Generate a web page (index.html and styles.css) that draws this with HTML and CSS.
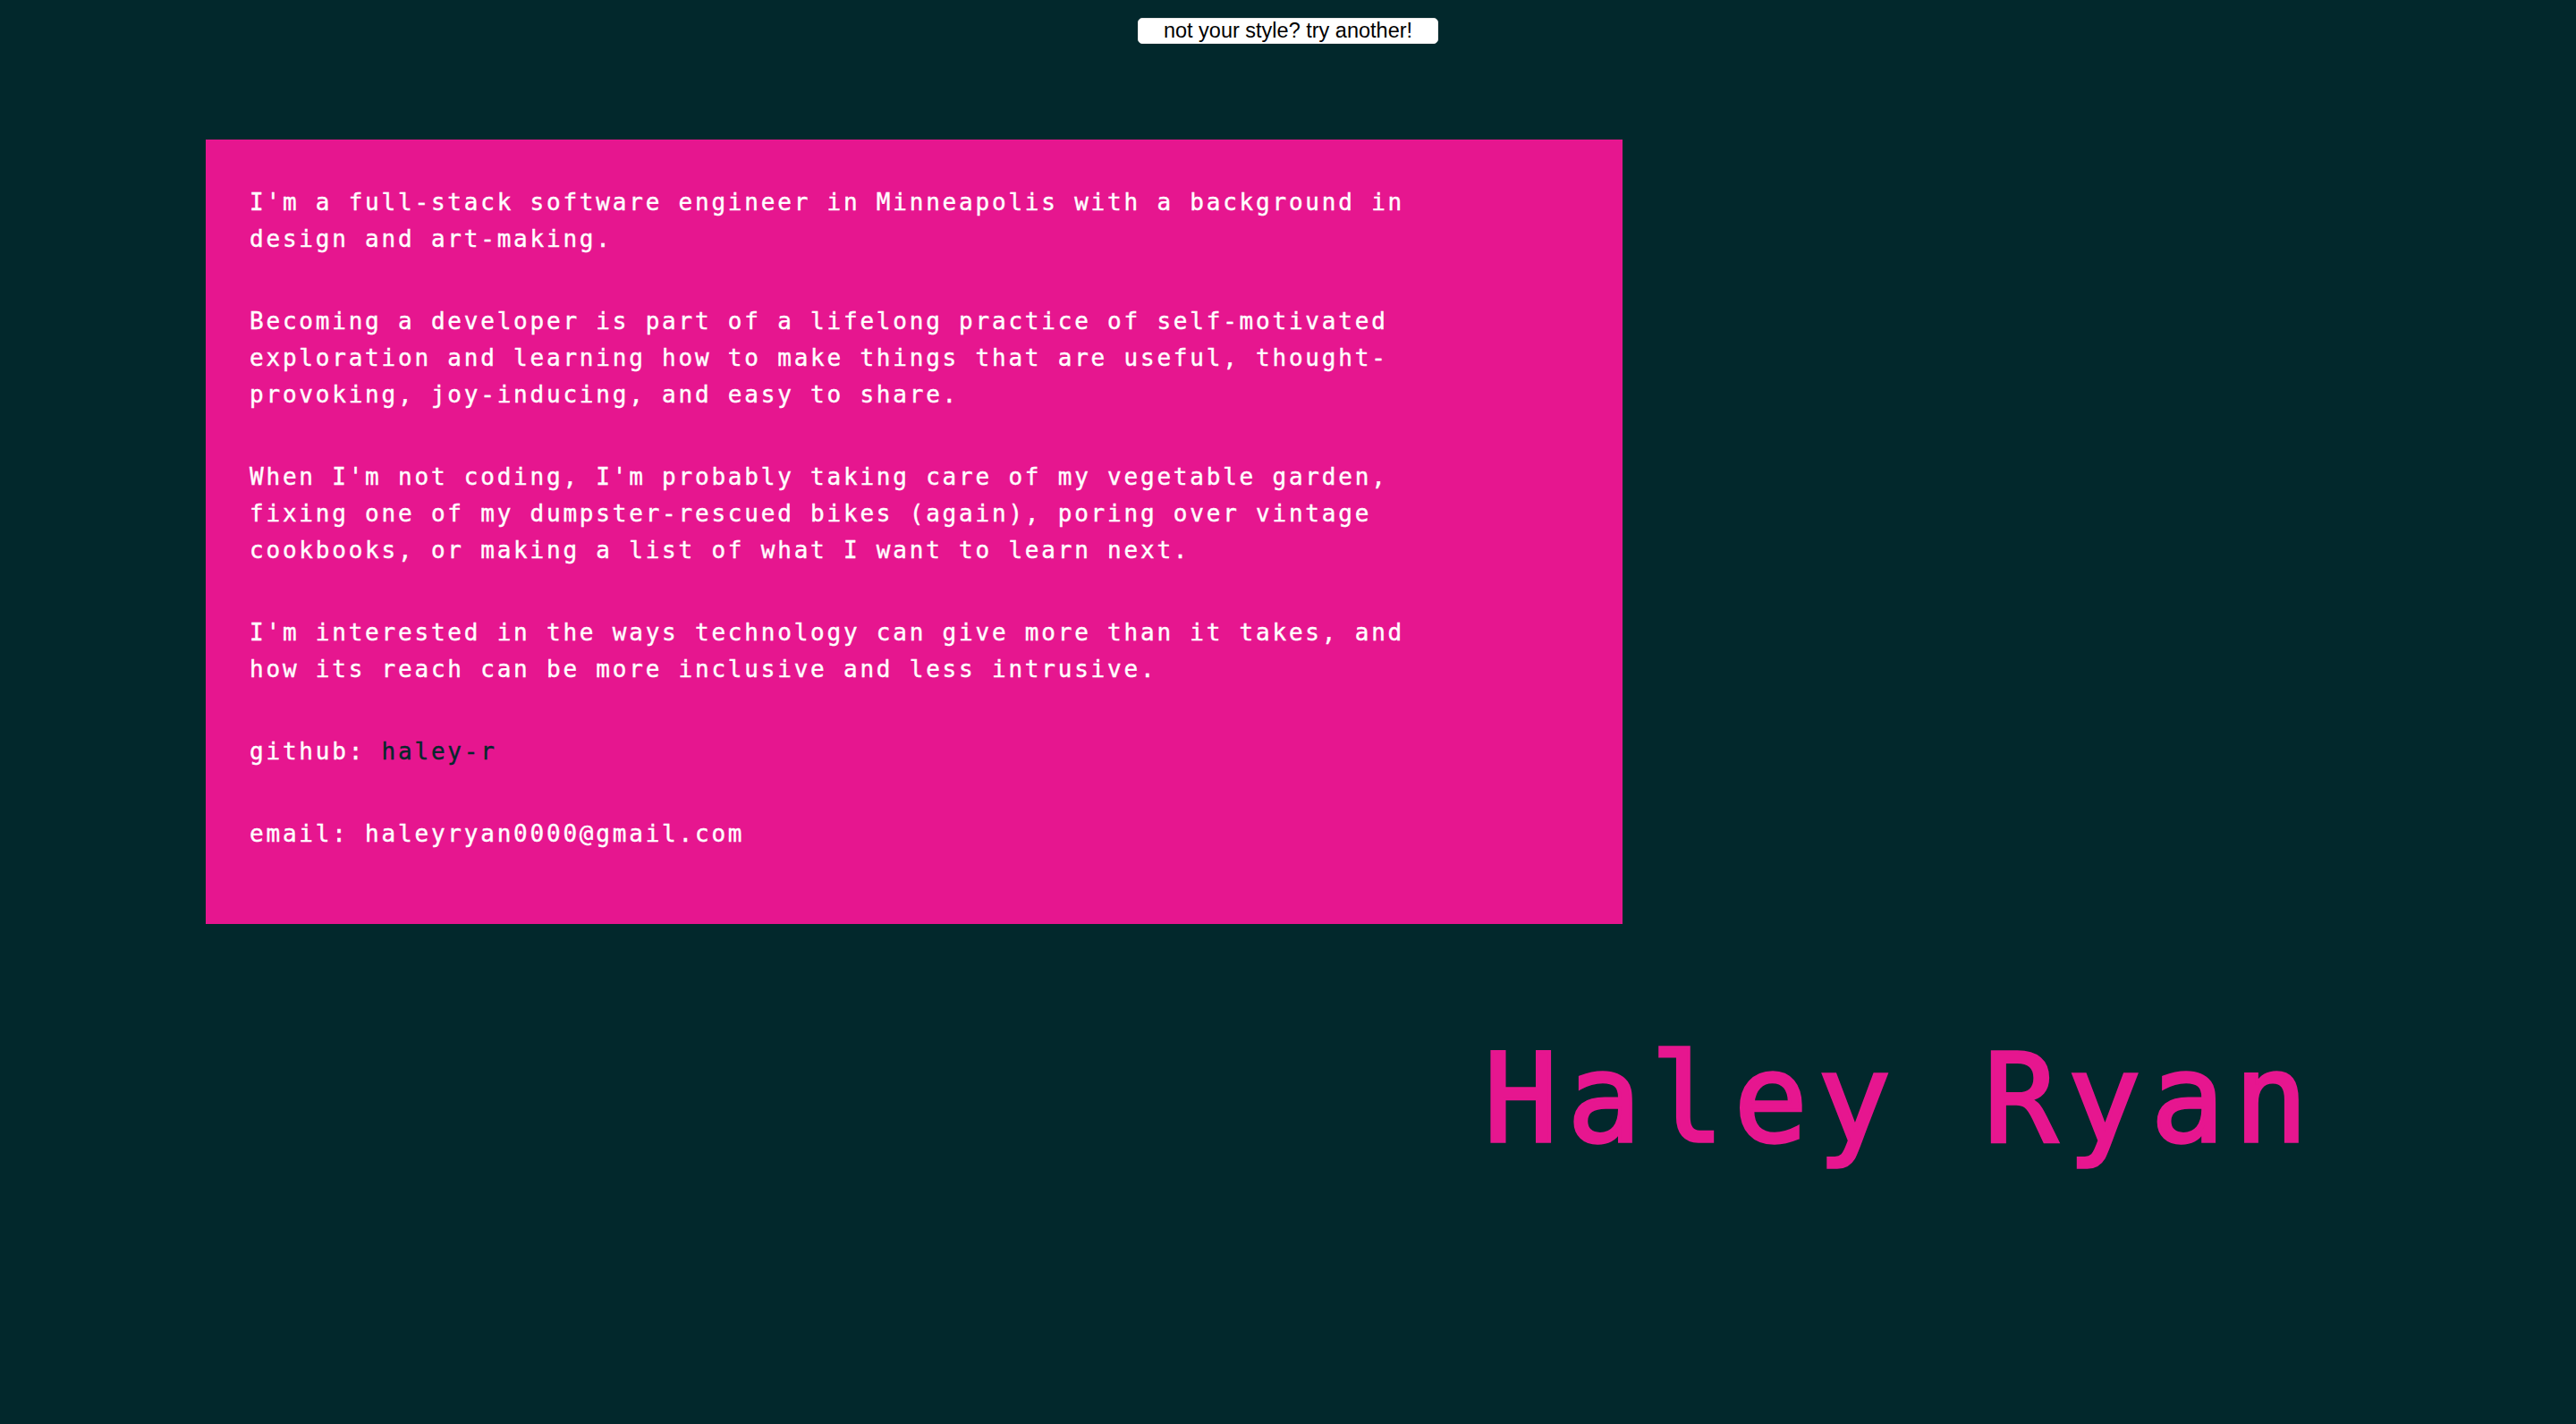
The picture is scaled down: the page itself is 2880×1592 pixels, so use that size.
FILE: index.html
```html
<!DOCTYPE html>
<html lang="en">
<head>
<meta charset="utf-8">
<title>Haley Ryan</title>
<link rel="stylesheet" href="styles.css">
</head>
<body>
<header class="topbar">
  <button class="style-btn" type="button">not your style? try another!</button>
</header>
<main class="page">
  <section class="about">
    <p>I'm a full-stack software engineer in Minneapolis with a background in design and art-making.</p>
    <p>Becoming a developer is part of a lifelong practice of self-motivated exploration and learning how to make things that are useful, thought-provoking, joy-inducing, and easy to share.</p>
    <p>When I'm not coding, I'm probably taking care of my vegetable garden, fixing one of my dumpster-rescued bikes (again), poring over vintage cookbooks, or making a list of what I want to learn next.</p>
    <p>I'm interested in the ways technology can give more than it takes, and how its reach can be more inclusive and less intrusive.</p>
    <p>github: <a class="gh" href="#">haley-r</a></p>
    <p>email: haleyryan0000@gmail.com</p>
  </section>
  <h1 class="name">Haley Ryan</h1>
</main>
</body>
</html>
```

FILE: styles.css
```css
html, body {
  margin: 0;
  padding: 0;
  background: #02282c;
}

body {
  min-height: 1592px;
}

.topbar {
  display: flex;
  justify-content: center;
  padding-top: 20px;
}

.style-btn {
  box-sizing: border-box;
  width: 336px;
  height: 29px;
  padding: 0;
  background: #ffffff;
  color: #000000;
  border: 1px solid #e8e8e8;
  border-radius: 5px;
  font-family: "Liberation Sans", Arial, sans-serif;
  font-size: 23.5px;
  line-height: 27px;
}

.page {
  display: flex;
  flex-direction: column;
  align-items: flex-start;
}

.about {
  box-sizing: border-box;
  width: 1584px;
  margin: 107px 0 0 230px;
  padding: 50px 50px 80px 49px;
  background: #e6168f;
  color: #ffffff;
  font-family: "DejaVu Sans Mono", "Liberation Mono", monospace;
  font-size: 26px;
  line-height: 41px;
  letter-spacing: 2.79px;
  -webkit-text-stroke: 0.4px currentColor;
}

.about p {
  max-width: 1340px;
  margin: 0 0 51px 0;
}

.about p:last-child {
  margin-bottom: 0;
}

.gh {
  color: #02282c;
  text-decoration: none;
}

.name {
  margin: 114px 0 0 1659px;
  color: #e6168f;
  font-family: "DejaVu Sans Mono", "Liberation Mono", monospace;
  font-size: 137px;
  font-weight: normal;
  line-height: 1.2;
  letter-spacing: 10.7px;
  white-space: nowrap;
  -webkit-text-stroke: 3.5px currentColor;
}
```
